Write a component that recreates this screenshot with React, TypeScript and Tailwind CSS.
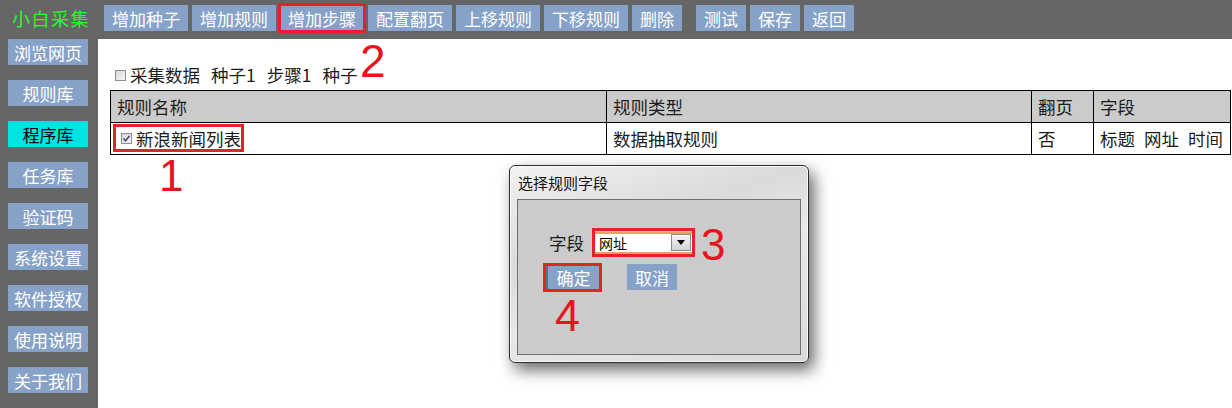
import { ReactNode } from "react";

const FONT = '"Noto Sans CJK SC", "Noto Sans", sans-serif';

function TopButton({
  label,
  width,
  marked,
}: {
  label: string;
  width: number;
  marked?: boolean;
}) {
  return (
    <div
      className={`flex h-[26px] items-center justify-center bg-[#87a2c8] text-[17px] leading-none text-white ${
        width === 84 ? "w-[84px]" : "w-[50px]"
      } ${marked ? "outline-[3px] outline-solid outline-[#e8202a] outline-offset-[-1px]" : ""}`}
    >
      {label}
    </div>
  );
}

function SideButton({ label, active }: { label: string; active?: boolean }) {
  return (
    <div
      className={`flex h-[26px] w-[80px] items-center justify-center text-[17px] leading-none ${
        active ? "bg-[#00e3e3] text-black" : "bg-[#87a2c8] text-white"
      }`}
    >
      {label}
    </div>
  );
}

function Check({ checked }: { checked?: boolean }) {
  return (
    <span className="relative inline-block h-[11px] w-[11px] shrink-0 border border-[#8e8f8f] bg-gradient-to-br from-[#d6d6d6] to-[#f8f8f8]">
      {checked && (
        <svg viewBox="0 0 9 9" className="absolute left-0 top-0 h-[9px] w-[9px]">
          <path d="M1.5 4.5 L3.6 6.8 L7.6 1.8" fill="none" stroke="#3c4f7a" strokeWidth="1.6" />
        </svg>
      )}
    </span>
  );
}

function Cell({ children, head }: { children: ReactNode; head?: boolean }) {
  return (
    <td
      className={`relative h-[32px] border border-black px-[6px] text-left align-middle font-normal text-[#1c1c1c] ${
        head ? "bg-[#cbcbcb]" : "bg-white"
      }`}
    >
      {children}
    </td>
  );
}

function Mark({ n, className }: { n: string; className: string }) {
  return (
    <div
      className={`absolute leading-none text-[#e8141c] ${className}`}
      style={{ fontFamily: '"Liberation Sans", Arial, sans-serif' }}
    >
      {n}
    </div>
  );
}

export default function App() {
  const topButtons = [
    { label: "增加种子", width: 84 },
    { label: "增加规则", width: 84 },
    { label: "增加步骤", width: 84, marked: true },
    { label: "配置翻页", width: 84 },
    { label: "上移规则", width: 84 },
    { label: "下移规则", width: 84 },
    { label: "删除", width: 50 },
  ];
  const rightButtons = ["测试", "保存", "返回"];
  const sideButtons = ["浏览网页", "规则库", "程序库", "任务库", "验证码", "系统设置", "软件授权", "使用说明", "关于我们"];

  return (
    <div className="relative h-[408px] w-[1232px] overflow-hidden bg-white" style={{ fontFamily: FONT }}>
      {/* top bar */}
      <div className="flex h-[39px] items-start bg-[#666666] pt-[5px]">
        <div className="w-[104px] pl-[12px] pt-[2px] text-[18px] leading-[22px] tracking-[1.5px] text-[#22ff22]">
          小白采集
        </div>
        <div className="flex gap-[4px]">
          {topButtons.map((b) => (
            <TopButton key={b.label} label={b.label} width={b.width} marked={b.marked} />
          ))}
        </div>
        <div className="ml-[14px] flex gap-[4px]">
          {rightButtons.map((b) => (
            <TopButton key={b} label={b} width={50} />
          ))}
        </div>
      </div>

      <div className="flex h-[369px]">
        {/* sidebar */}
        <div className="flex w-[98px] flex-col gap-[15px] bg-[#666666] pl-[8px]">
          {sideButtons.map((s) => (
            <SideButton key={s} label={s} active={s === "程序库"} />
          ))}
        </div>

        {/* content */}
        <div className="flex-1 bg-white pl-[12px] pt-[25px]">
          <div className="flex h-[22px] items-center pl-[5px] text-[17.5px] leading-none text-[#1c1c1c]">
            <Check />
            <span className="ml-[4px]">采集数据</span>
            <span className="ml-[11px]">种子1</span>
            <span className="ml-[11px]">步骤1</span>
            <span className="ml-[11px]">种子</span>
          </div>
          <table className="mt-[4px] w-[1120px] table-fixed border-collapse text-[17.5px] leading-none">
            <colgroup>
              <col className="w-[496px]" />
              <col className="w-[425px]" />
              <col className="w-[62px]" />
              <col className="w-[137px]" />
            </colgroup>
            <thead>
              <tr>
                <Cell head>规则名称</Cell>
                <Cell head>规则类型</Cell>
                <Cell head>翻页</Cell>
                <Cell head>字段</Cell>
              </tr>
            </thead>
            <tbody>
              <tr>
                <Cell>
                  <div className="flex items-center pl-[4px]">
                    <Check checked />
                    <span className="ml-[4px]">新浪新闻列表</span>
                  </div>
                  <div className="absolute left-[2px] top-[1px] h-[28px] w-[131px] border-[3px] border-[#e8202a]" />
                </Cell>
                <Cell>数据抽取规则</Cell>
                <Cell>否</Cell>
                <Cell>
                  <span>标题</span>
                  <span className="ml-[9px]">网址</span>
                  <span className="ml-[9px]">时间</span>
                </Cell>
              </tr>
            </tbody>
          </table>
        </div>
      </div>

      {/* dialog */}
      <div className="absolute left-[509px] top-[165px] flex h-[198px] w-[300px] flex-col rounded-[6px] border border-[#2e2e2e] bg-[linear-gradient(160deg,#f2f2f2_0%,#dadada_35%,#e8e8e8_55%,#d9d9d9_100%)] shadow-[inset_0_0_0_1px_rgba(255,255,255,0.8),5px_7px_16px_rgba(0,0,0,0.6)]">
        <div className="h-[33px] pl-[8px] pt-[9px] text-[15px] leading-[16px] text-[#111]">选择规则字段</div>
        <div className="mx-[7px] mb-[7px] flex-1 border border-[#707070] bg-[#cbcbcb] pl-[25px] pt-[28px]">
          <div className="flex items-center">
            <span className="ml-[6px] w-[43px] text-[17.5px] leading-none text-[#1c1c1c]">字段</span>
            <div className="flex h-[29px] w-[103px] items-center justify-center border-[3px] border-[#e8202a]">
              <div className="flex h-[22px] w-[97px] items-center justify-between border-y-2 border-[#d8a864] bg-white pl-[4px] pr-[1px]">
                <span className="text-[14px] leading-none text-black">网址</span>
                <span className="flex h-[17px] w-[20px] items-center justify-center border border-[#8a8a8a] bg-gradient-to-b from-[#f4f4f4] to-[#d4d4d4]">
                  <svg viewBox="0 0 8 5" className="h-[5px] w-[8px]">
                    <path d="M0 0 H8 L4 5 Z" fill="#000" />
                  </svg>
                </span>
              </div>
            </div>
          </div>
          <div className="mt-[6px] flex items-start">
            <div className="flex h-[29px] w-[59px] items-center justify-center border-[3px] border-[#e8202a]">
              <div className="flex h-[23px] w-[53px] items-center justify-center border-l-2 border-[#5d7090] bg-[#87a2c8] text-[17px] leading-none text-white">
                确定
              </div>
            </div>
            <div className="ml-[25px] mt-[1px] flex h-[26px] w-[50px] items-center justify-center bg-[#87a2c8] text-[17px] leading-none text-white">
              取消
            </div>
          </div>
        </div>
      </div>

      {/* annotations */}
      <Mark n="2" className="left-[360px] top-[38px] text-[46px]" />
      <Mark n="1" className="left-[159px] top-[154px] text-[44px]" />
      <Mark n="3" className="left-[701px] top-[223px] text-[44px]" />
      <Mark n="4" className="left-[555px] top-[293px] text-[45px]" />
    </div>
  );
}
